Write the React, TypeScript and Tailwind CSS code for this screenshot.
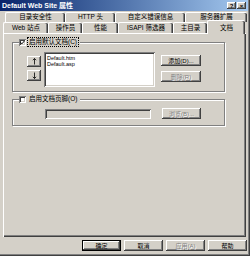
import React from 'react';

const raised =
  'bg-[#d4d0c8] shadow-[inset_-1px_-1px_0_#404040,inset_1px_1px_0_#ffffff,inset_-2px_-2px_0_#808080]';
const sunken =
  'shadow-[inset_1px_1px_0_#808080,inset_-1px_-1px_0_#ffffff,inset_2px_2px_0_#404040,inset_-2px_-2px_0_#d4d0c8]';

function Btn({ label, w = 'w-[39px]', disabled = false, isDefault = false }: { label: string; w?: string; disabled?: boolean; isDefault?: boolean }) {
  return (
    <div
      className={`${w} h-[11px] shrink-0 flex items-center justify-center text-[6px] leading-none ${raised} ${
        isDefault ? 'border border-black' : ''
      } ${disabled ? 'text-[#808080] [text-shadow:1px_1px_0_#ffffff]' : 'text-black'}`}
    >
      {label}
    </div>
  );
}

function Check({ checked }: { checked: boolean }) {
  return (
    <div className={`w-[7px] h-[7px] bg-white shrink-0 flex items-center justify-center ${sunken}`}>
      {checked && (
        <svg width="5" height="5" viewBox="0 0 5 5">
          <path d="M0.6 2.4 L1.9 3.8 L4.4 1" stroke="#000" strokeWidth="1" fill="none" />
        </svg>
      )}
    </div>
  );
}

function Arrow({ down = false }: { down?: boolean }) {
  return (
    <svg width="5" height="7" viewBox="0 0 5 7" className={down ? 'rotate-180' : ''}>
      <path d="M2.5 0.5 V6.5 M0.8 2.2 L2.5 0.5 L4.2 2.2" stroke="#000" strokeWidth="0.8" fill="none" />
    </svg>
  );
}

function Tab({ label, w }: { label: string; w: string }) {
  return (
    <div
      className={`${w} h-full flex items-center justify-center text-[6.5px] leading-none rounded-t-[2px] border-t border-l border-white shadow-[inset_-1px_0_0_#404040,inset_-2px_0_0_#808080]`}
    >
      {label}
    </div>
  );
}

export default function App() {
  return (
    <div className="w-[250px] h-[256px] bg-[#d4d0c8] text-black font-['Liberation_Sans','Noto_Sans_CJK_SC',sans-serif] flex flex-col pr-[2px] pb-[2px] shadow-[inset_-1px_-1px_0_#404040,inset_-2px_-2px_0_#808080] overflow-hidden">
      {/* title bar */}
      <div className="h-[11px] flex items-center justify-between bg-gradient-to-r from-[#0a246a] to-[#a6caf0] pl-[2px] pr-[2px]">
        <span className="text-white font-bold text-[7px] leading-none">Default Web Site 属性</span>
        <div className="flex gap-[1px]">
          <div className={`w-[9px] h-[7px] flex items-center justify-center text-[6px] font-bold leading-none ${raised}`}>?</div>
          <div className={`w-[9px] h-[7px] flex items-center justify-center text-[6px] font-bold leading-none ${raised}`}>×</div>
        </div>
      </div>

      {/* tabs */}
      <div className="mt-[1px] h-[10px] flex pl-[5px] pr-[1px]">
        <Tab label="目录安全性" w="w-[60px]" />
        <Tab label="HTTP 头" w="w-[50px]" />
        <Tab label="自定义错误信息" w="w-[70px]" />
        <Tab label="服务器扩展" w="w-[62px]" />
      </div>
      <div className="h-[11px] flex pl-[3px]">
        <Tab label="Web 站点" w="w-[45px]" />
        <Tab label="操作员" w="w-[34px]" />
        <Tab label="性能" w="w-[36px]" />
        <Tab label="ISAPI 筛选器" w="w-[55px]" />
        <Tab label="主目录" w="w-[34px]" />
        <div className="relative z-10 w-[38px] h-[14px] -mt-[2px] flex justify-center pt-[4px] text-[6.5px] leading-none bg-[#d4d0c8] rounded-t-[2px] border-t border-l border-white shadow-[inset_-1px_0_0_#404040,inset_-2px_0_0_#808080]">
          文档
        </div>
      </div>

      {/* panel */}
      <div className="ml-[3px] w-[243px] h-[204px] shadow-[inset_1px_1px_0_#ffffff,inset_-1px_-1px_0_#404040,inset_-2px_-2px_0_#808080] pt-[5px] pl-[9px]">
        <fieldset className="w-[213px] border border-[#808080] shadow-[inset_1px_1px_0_#ffffff,1px_1px_0_#ffffff] p-0">
          <legend className="ml-[6px] pr-[2px] flex items-center gap-[2px] bg-[#d4d0c8] h-[8px]">
            <Check checked />
            <span className="text-[6.5px] leading-none px-[1px] py-[1px] outline outline-1 outline-dotted outline-black">启用默认文档(C)</span>
          </legend>
          <div className="flex pl-[14px] pt-[6px] pb-[4px]">
            <div className="flex flex-col gap-[3px] mt-[4px]">
              <div className={`w-[14px] h-[11px] flex items-center justify-center ${raised}`}>
                <Arrow />
              </div>
              <div className={`w-[14px] h-[11px] flex items-center justify-center ${raised}`}>
                <Arrow down />
              </div>
            </div>
            <div className={`ml-[3px] w-[111px] h-[35px] bg-white ${sunken} pl-[3px] pt-[3px] text-[5.5px] leading-[6px]`}>
              <div>Default.htm</div>
              <div>Default.asp</div>
            </div>
            <div className="ml-[6px] mt-[3px] flex flex-col gap-[5px]">
              <Btn label="添加(D)..." w="w-[40px]" />
              <Btn label="删除(R)" w="w-[40px]" disabled />
            </div>
          </div>
        </fieldset>

        <fieldset className="mt-[3px] w-[213px] border border-[#808080] shadow-[inset_1px_1px_0_#ffffff,1px_1px_0_#ffffff] p-0">
          <legend className="ml-[6px] pr-[2px] flex items-center gap-[2px] bg-[#d4d0c8] h-[8px]">
            <Check checked={false} />
            <span className="text-[6.5px] leading-none px-[1px]">启用文档页脚(O)</span>
          </legend>
          <div className="flex items-center pl-[32px] pt-[5px] pb-[6px]">
            <div className={`w-[106px] h-[10px] ${sunken}`} />
            <div className="ml-[11px]">
              <Btn label="浏览(B)..." disabled />
            </div>
          </div>
        </fieldset>
      </div>

      {/* buttons */}
      <div className="mt-[3px] flex justify-end gap-[3px] pr-[1px]">
        <Btn label="确定" isDefault />
        <Btn label="取消" />
        <Btn label="应用(A)" disabled />
        <Btn label="帮助" />
      </div>
    </div>
  );
}
